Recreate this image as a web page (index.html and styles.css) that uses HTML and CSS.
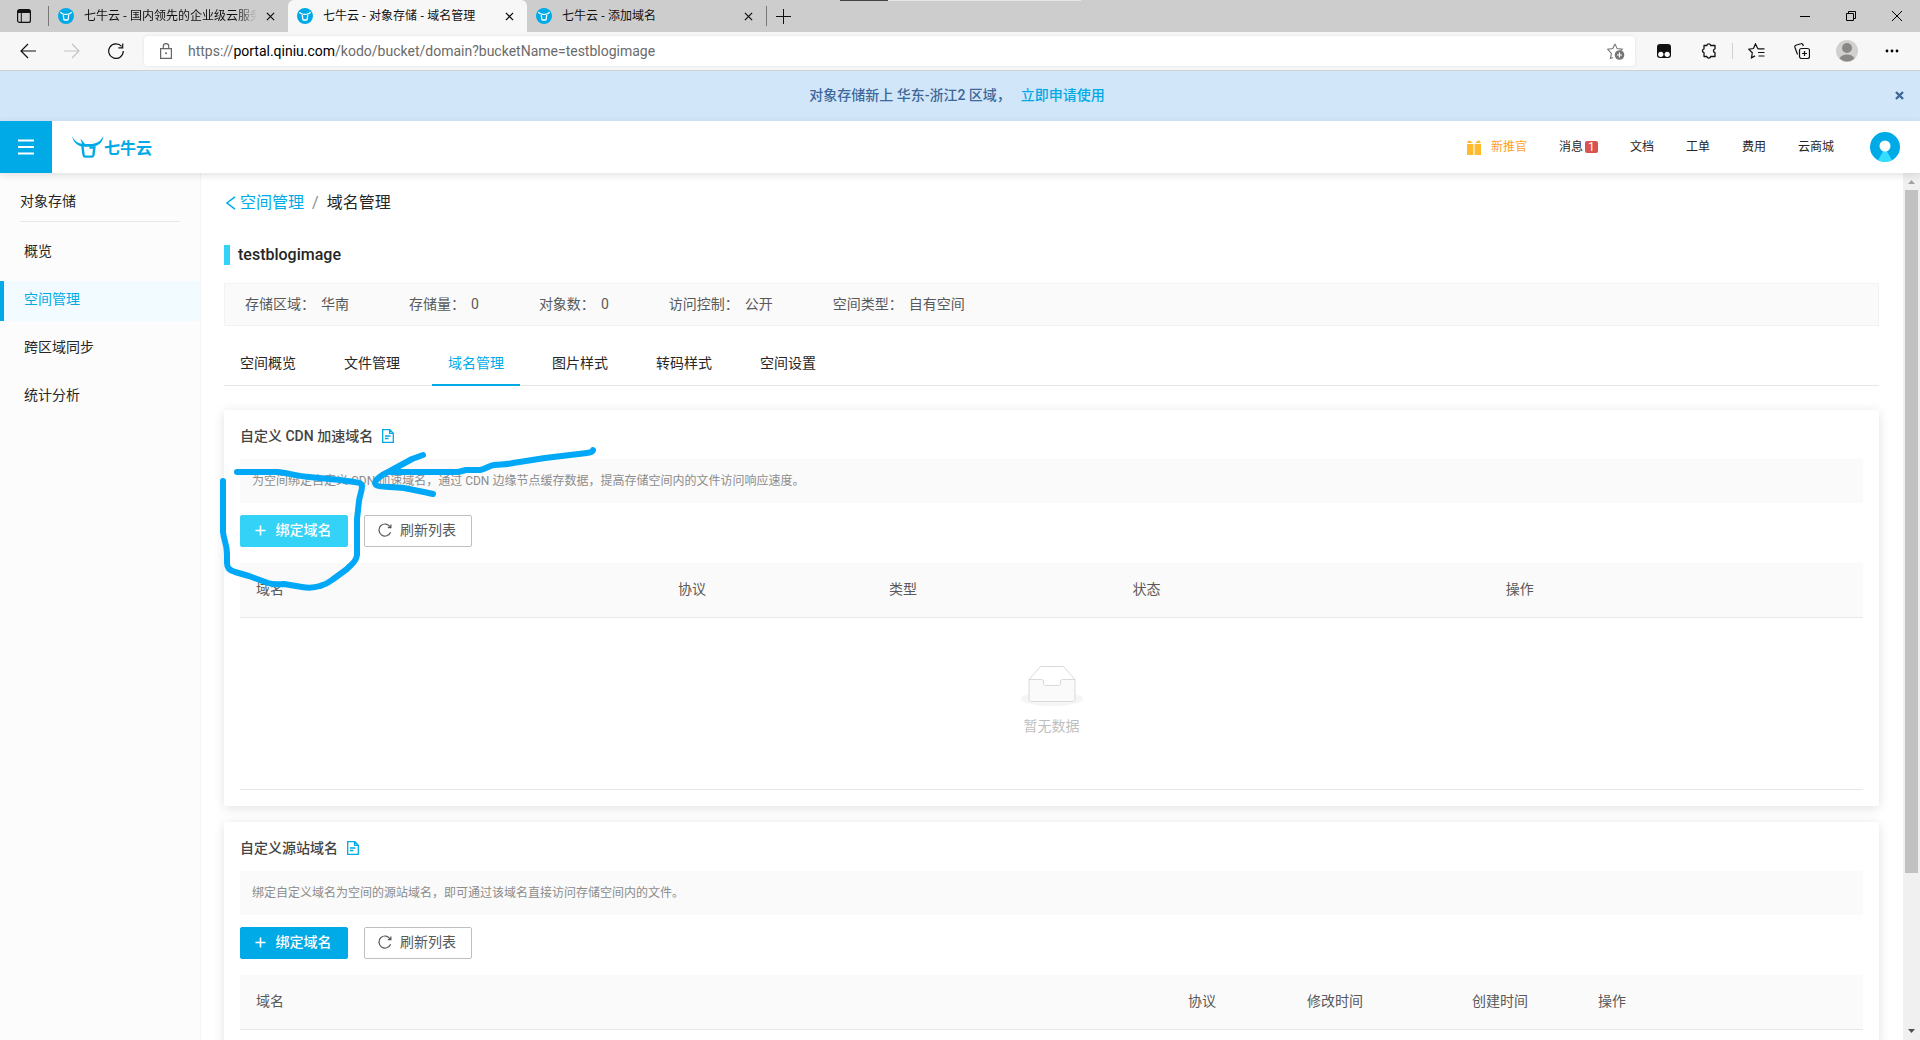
FILE: index.html
```html
<!DOCTYPE html>
<html lang="zh-CN">
  <head>
    <meta charset="UTF-8" />
    <meta name="viewport" content="width=device-width, initial-scale=1.0" />
    <title>七牛云 - 对象存储 - 域名管理</title>
    <link rel="stylesheet" href="styles.css">
  </head>
  <body>
    <!-- Shared icons -->
    <svg class="sprite" aria-hidden="true">
      <symbol id="favicon" viewBox="0 0 16 16">
        <circle cx="8" cy="8" r="8" fill="#00aae7" />
        <path d="M2.500 4c1.500 3.200 9.500 3.200 11 0M5.300 7l.5 4.200c0 .6.4.8.9.8h2.600c.5 0 .9-.2.9-.8l.5-4.200" fill="none" stroke="#fff" stroke-width="1.300" />
      </symbol>
      <symbol id="close" viewBox="0 0 10 10">
        <path d="M1 1l8 8M9 1l-8 8" fill="none" stroke="#111" stroke-width="1.400" />
      </symbol>
      <symbol id="doc" viewBox="0 0 12 14">
        <path d="M.7.7h7.1l3.500 3.500v9.100H.7zM7.600.7v3.700h3.700M3 7h5.500M3 9.500h3.500" fill="none" stroke="#00aae7" stroke-width="1.300" />
      </symbol>
      <symbol id="plus" viewBox="0 0 12 12">
        <path d="M6 .5v11M.5 6h11" fill="none" stroke="#fff" stroke-width="1.800" />
      </symbol>
      <symbol id="reload" viewBox="0 0 14 14">
        <path d="M12.600 9.200A6 6 0 1 1 12.300 4.200M12.900 1.500v3.200H9.800" fill="none" stroke="#595959" stroke-width="1.200" />
      </symbol>
    </svg>

    <div class="tab-strip">
      <span class="window-mark"></span>
      <button class="strip-btn" aria-label="标签页操作">
        <svg width="14" height="14" viewBox="0 0 14 14"><rect x=".6" y=".6" width="12.800" height="12.800" rx="2" fill="none" stroke="#111" stroke-width="1.200" /><path d="M1 1h12v3H1zM3.800 4h1v9h-1z" fill="#111" /></svg>
      </button>
      <span class="strip-sep"></span>
      <div class="browser-tab">
        <svg width="16" height="16"><use href="#favicon" /></svg>
        <span class="tab-title faded">七牛云 - 国内领先的企业级云服务</span>
        <button class="tab-close" aria-label="关闭"><svg width="9" height="9"><use href="#close" /></svg></button>
      </div>
      <div class="browser-tab current">
        <svg width="16" height="16"><use href="#favicon" /></svg>
        <span class="tab-title">七牛云 - 对象存储 - 域名管理</span>
        <button class="tab-close" aria-label="关闭"><svg width="9" height="9"><use href="#close" /></svg></button>
      </div>
      <div class="browser-tab">
        <svg width="16" height="16"><use href="#favicon" /></svg>
        <span class="tab-title">七牛云 - 添加域名</span>
        <button class="tab-close" aria-label="关闭"><svg width="9" height="9"><use href="#close" /></svg></button>
      </div>
      <span class="strip-sep"></span>
      <button class="strip-btn" aria-label="新建标签页">
        <svg width="15" height="15" viewBox="0 0 15 15"><path d="M7.500 0v15M0 7.500h15" stroke="#111" /></svg>
      </button>
      <div class="window-buttons">
        <button aria-label="最小化"><svg width="10" height="10" viewBox="0 0 10 10"><path d="M0 5.500h10" stroke="#000" /></svg></button>
        <button aria-label="还原"><svg width="10" height="10" viewBox="0 0 10 10"><path d="M.5 2.500h7v7h-7zM2.500 2.500v-2h7v7h-2" fill="none" stroke="#000" /></svg></button>
        <button aria-label="关闭窗口"><svg width="10" height="10" viewBox="0 0 10 10"><path d="M0 0l10 10M10 0L0 10" stroke="#000" /></svg></button>
      </div>
    </div>

    <div class="toolbar">
      <button aria-label="后退"><svg width="16" height="16" viewBox="0 0 16 16"><path d="M8 1L1 8l7 7M1 8h15" fill="none" stroke="#111" stroke-width="1.200" /></svg></button>
      <button aria-label="前进"><svg width="16" height="16" viewBox="0 0 16 16"><path d="M8 1l7 7-7 7M15 8H0" fill="none" stroke="#c4c4c4" stroke-width="1.200" /></svg></button>
      <button aria-label="刷新"><svg width="16" height="16" viewBox="0 0 16 16"><path d="M15.300 8A7.300 7.300 0 1 1 13.600 3.400M14.700.5v4.300h-4.300" fill="none" stroke="#111" stroke-width="1.200" /></svg></button>
      <div class="address">
        <svg width="12" height="16" viewBox="0 0 12 16"><path d="M.6 5.600h10.800v9.800H.6zM3.300 5.600V3.300a2.700 2.700 0 0 1 5.400 0v2.300" fill="none" stroke="#666" stroke-width="1.200" /><circle cx="6" cy="10.300" r="1" fill="#666" /></svg>
        <span class="url">https://<b>portal.qiniu.com</b>/kodo/bucket/domain?bucketName=testblogimage</span>
        <button aria-label="收藏"><svg width="18" height="17" viewBox="0 0 18 17"><path d="M8 .9l2.100 4.700 5.100.6-1.700 1.600M6 14.500l-2.600 1 1-5.200L.8 6.300l5-.7L8 .9" fill="none" stroke="#767676" stroke-width="1.100" /><circle cx="12.500" cy="12" r="4.800" fill="#767676" /><path d="M12.500 9.500v5M10 12h5" stroke="#fff" stroke-width="1.200" /></svg></button>
      </div>
      <div class="tools">
        <button aria-label="扩展程序"><svg width="14" height="14" viewBox="0 0 14 14"><rect width="14" height="14" rx="3" fill="#111" /><circle cx="3.800" cy="10.300" r="2.600" fill="#fff" /><circle cx="10.200" cy="10.300" r="2.600" fill="#fff" /></svg></button>
        <button aria-label="扩展"><svg width="16" height="16" viewBox="0 0 16 16"><path d="M3 2.500h2.800a2 2 0 0 1 3.900 0H14v3.300a2 2 0 0 0 0 3.900v3.800H9.700a2 2 0 0 1-3.900 0H3V9.700a2 2 0 0 1 0-3.900z" fill="none" stroke="#111" stroke-width="1.300" stroke-linejoin="round" /></svg></button>
        <span class="tool-sep"></span>
        <button aria-label="收藏夹"><svg width="17" height="16" viewBox="0 0 17 16"><path d="M9.800 5.800L7.500.9 5.400 5.500.8 6.200l3.500 3.600-.8 5 3.500-1.900M9.800 5.800h6.700M10 9.500h6.500M10.500 13h6" fill="none" stroke="#111" stroke-width="1.200" /></svg></button>
        <button aria-label="集锦"><svg width="16" height="16" viewBox="0 0 16 16"><rect x="5.500" y="5.500" width="10" height="10" rx="2" fill="none" stroke="#111" stroke-width="1.200" /><path d="M10.500 8v5M8 10.500h5M3.500 11.500L.9 4.200C.6 3.200 1 2.600 1.800 2.300L7 .7c.9-.3 1.600.1 1.900 1l.4 1.500" fill="none" stroke="#111" stroke-width="1.200" /></svg></button>
        <button aria-label="个人资料"><svg width="22" height="22" viewBox="0 0 22 22"><circle cx="11" cy="11" r="11" fill="#d2d0ce" /><circle cx="11" cy="8" r="5" fill="#8a8886" /><path d="M3.500 18.500C5.500 13 16.500 13 18.500 18.500a11 11 0 0 1-15 0z" fill="#8a8886" /></svg></button>
        <button aria-label="设置"><svg width="14" height="4" viewBox="0 0 14 4"><circle cx="2" cy="2" r="1.400" /><circle cx="7" cy="2" r="1.400" /><circle cx="12" cy="2" r="1.400" /></svg></button>
      </div>
    </div>

    <div class="notice">
      <span>对象存储新上 华东-浙江2 区域，</span>
      <a href="#">立即申请使用</a>
      <button class="notice-close" aria-label="关闭公告"><svg width="9" height="9" viewBox="0 0 9 9"><path d="M1 1l7 7M8 1L1 8" stroke="#3d6899" stroke-width="2.400" /></svg></button>
    </div>

    <header class="header">
      <button class="menu-btn" aria-label="菜单"><svg width="16" height="16" viewBox="0 0 16 16"><path d="M0 1.500h16M0 8h16M0 14.500h16" stroke="#fff" stroke-width="2" /></svg></button>
      <a class="logo" href="#">
        <svg width="32" height="22" viewBox="0 0 32 22"><path d="M0 0c3 6 7 7.500 10 7.700L8.500 2.500l4.500 5.500h5C24 8 28 6 31.500 0c-1 7-5.500 10.500-12.500 10.800h-6C5.500 10.500 1.500 6.500 0 0z" fill="#00aae7" /><path d="M10.300 9.500l1.300 9.500c.2 1 .7 1.600 1.700 1.600h6.400c1 0 1.500-.6 1.700-1.600l1-7.500h-5" fill="none" stroke="#00aae7" stroke-width="2.400" /></svg>
        <span>七牛云</span>
      </a>
      <nav class="top-nav">
        <a class="promo" href="#"><svg width="14" height="15" viewBox="0 0 14 15"><path d="M0 4h6.400v11H0zM7.600 4H14v11H7.600zM0 3l2-3 4 3zM14 3l-2-3-4 3z" fill="#ffbb2d" /></svg>新推官</a>
        <a href="#">消息<span class="badge">1</span></a>
        <a href="#">文档</a>
        <a href="#">工单</a>
        <a href="#">费用</a>
        <a href="#">云商城</a>
        <a class="avatar" href="#" aria-label="账号"><svg width="30" height="30" viewBox="0 0 30 30"><circle cx="15" cy="15" r="15" fill="#00aae7" /><path d="M15 16l7 12.300a15 15 0 0 1-14 0z" fill="#35ddff" /><circle cx="15" cy="14" r="5.500" fill="#fff" /></svg></a>
      </nav>
    </header>

    <div class="layout">
      <aside class="sidebar">
        <h2>对象存储</h2>
        <a href="#">概览</a>
        <a class="active" href="#">空间管理</a>
        <a href="#">跨区域同步</a>
        <a href="#">统计分析</a>
      </aside>

      <main class="content">
        <div class="breadcrumb">
          <a href="#"><svg width="10" height="14" viewBox="0 0 10 14"><path d="M9 .8L1 7l8 6.200" fill="none" stroke="#00aae7" stroke-width="1.500" /></svg>空间管理</a>
          <span class="slash">/</span>
          <span>域名管理</span>
        </div>
        <h1>testblogimage</h1>

        <dl class="info">
          <div><dt>存储区域：</dt><dd>华南</dd></div>
          <div><dt>存储量：</dt><dd>0</dd></div>
          <div><dt>对象数：</dt><dd>0</dd></div>
          <div><dt>访问控制：</dt><dd>公开</dd></div>
          <div><dt>空间类型：</dt><dd>自有空间</dd></div>
        </dl>

        <nav class="tabs">
          <a href="#">空间概览</a>
          <a href="#">文件管理</a>
          <a class="active" href="#">域名管理</a>
          <a href="#">图片样式</a>
          <a href="#">转码样式</a>
          <a href="#">空间设置</a>
        </nav>

        <section class="card">
          <h3>自定义 CDN 加速域名 <svg width="12" height="14"><use href="#doc" /></svg></h3>
          <p class="tip">为空间绑定自定义 CDN 加速域名，通过 CDN 边缘节点缓存数据，提高存储空间内的文件访问响应速度。</p>
          <div class="actions">
            <button class="btn primary hovered"><svg width="11" height="11"><use href="#plus" /></svg>绑定域名</button>
            <button class="btn"><svg width="14" height="14"><use href="#reload" /></svg>刷新列表</button>
          </div>
          <table class="cdn-table">
            <thead>
              <tr><th>域名</th><th>协议</th><th>类型</th><th>状态</th><th>操作</th></tr>
            </thead>
            <tbody>
              <tr>
                <td colspan="5">
                  <div class="empty">
                    <svg width="64" height="41" viewBox="0 0 64 41">
                      <ellipse cx="32" cy="33" rx="31" ry="7" fill="#f5f5f5" />
                      <path d="M9 13.500L20.500.500h23L55 13.500" fill="#fff" stroke="#d9d9d9" />
                      <path d="M9 13.500h12.500c1.500 0 2 1 2 2.500v1c0 1.500 1 2.500 2 2.500h13c1 0 2-1 2-2.500v-1c0-1.500.5-2.500 2-2.500H55V33c0 1.500-1 2.500-2.500 2.500h-41C10 35.500 9 34.500 9 33z" fill="#fafafa" stroke="#d9d9d9" />
                    </svg>
                    <span>暂无数据</span>
                  </div>
                </td>
              </tr>
            </tbody>
          </table>
        </section>

        <section class="card">
          <h3>自定义源站域名 <svg width="12" height="14"><use href="#doc" /></svg></h3>
          <p class="tip">绑定自定义域名为空间的源站域名，即可通过该域名直接访问存储空间内的文件。</p>
          <div class="actions">
            <button class="btn primary"><svg width="11" height="11"><use href="#plus" /></svg>绑定域名</button>
            <button class="btn"><svg width="14" height="14"><use href="#reload" /></svg>刷新列表</button>
          </div>
          <table class="source-table">
            <thead>
              <tr><th>域名</th><th>协议</th><th>修改时间</th><th>创建时间</th><th>操作</th></tr>
            </thead>
          </table>
        </section>

        <!-- Hand-drawn pointer to the bind button -->
        <svg class="scribble" width="400" height="160" viewBox="210 440 400 160">
          <path d="M237 473h40c11 1 20 4 32 5l31 3c15 2 22 2 22 6 0 6-2 8-3 15l-2 18v36c-1 8-7 10-10 14l-15 11c-5 4-8 5-12 6-6 2-12 2-18 1l-18-3c-6 0-10 1-16-1l-19-7-14-4c-6-2-8-4-8-9v-9c0-10-3-13-4-22v-51" />
          <path d="M593 451c-1 3-3 2-6 3l-42 5-32 5c-8 2-12 1-19 2-6 1-8 4-14 5h-14l-8 2h-67" />
          <path d="M423 456l-11 4-22 12c-7 3-18 10-14 14 3 3 17 1 28 3l20 4 9 2" />
        </svg>
      </main>

      <div class="scrollbar" aria-hidden="true">
        <svg width="17" height="17" viewBox="0 0 17 17"><path d="M5 11h7L8.500 7z" fill="#a3a3a3" /></svg>
        <div class="track"><div class="thumb"></div></div>
        <svg width="17" height="17" viewBox="0 0 17 17"><path d="M5 6h7l-3.500 4z" fill="#505050" /></svg>
      </div>
    </div>
  </body>
</html>
```
FILE: styles.css
```css
* {
  box-sizing: border-box;
}
body {
  display: flex;
  flex-direction: column;
  height: 100vh;
  margin: 0;
  overflow: hidden;
  font-family: Roboto, "Noto Sans CJK SC", sans-serif;
  font-size: 14px;
  line-height: 22px;
  color: #262626;
  background: #fff;
}
a {
  color: inherit;
  text-decoration: none;
}
button {
  display: flex;
  align-items: center;
  justify-content: center;
  padding: 0;
  border: none;
  background: none;
  font: inherit;
  color: inherit;
  cursor: pointer;
}
svg {
  flex: none;
}
.sprite {
  position: absolute;
  width: 0;
  height: 0;
}

/* Browser tabs */
.tab-strip {
  position: relative;
  display: flex;
  align-items: center;
  flex: none;
  height: 32px;
  background: #cdcdcd;
  font-family: "Open Sans", "Noto Sans CJK SC", sans-serif;
  font-size: 12px;
}
.window-mark {
  position: absolute;
  top: 0;
  left: 840px;
  width: 241px;
  height: 1px;
  background: #e6e6e6;
  border-left: 48px solid #444;
}
.strip-btn {
  width: 48px;
  height: 32px;
}
.strip-btn:last-of-type {
  width: 32px;
}
.strip-sep {
  width: 1px;
  height: 20px;
  background: #777;
}
.browser-tab {
  display: flex;
  align-items: center;
  width: 239px;
  height: 32px;
  padding: 0 10px 0 9px;
}
.browser-tab.current {
  background: #f7f7f7;
  border-radius: 6px 6px 0 0;
}
.tab-title {
  flex: 1;
  margin: 0 0 0 10px;
  white-space: nowrap;
  color: #111;
}
.faded {
  -webkit-mask-image: linear-gradient(to right, #000 86%, transparent 97%);
  mask-image: linear-gradient(to right, #000 86%, transparent 97%);
}
.tab-close {
  width: 16px;
  height: 16px;
}
.window-buttons {
  display: flex;
  margin-left: auto;
}
.window-buttons button {
  width: 46px;
  height: 28px;
}

/* Address bar */
.toolbar {
  display: flex;
  align-items: center;
  flex: none;
  height: 39px;
  padding: 0 6px;
  background: #f7f7f7;
  border-bottom: 1px solid #cfcfcf;
}
.toolbar > button {
  width: 44px;
  height: 30px;
}
.address {
  display: flex;
  align-items: center;
  flex: 1;
  height: 30px;
  margin-left: 6px;
  padding: 0 10px 0 16px;
  background: #fff;
  border-radius: 4px;
  box-shadow: 0 0 3px rgba(0, 0, 0, 0.1);
}
.url {
  flex: 1;
  margin-left: 16px;
  color: #6b6b6b;
}
.url b {
  font-weight: normal;
  color: #000;
}
.tools {
  display: flex;
  align-items: center;
}
.tools button {
  width: 45px;
  height: 30px;
}
.tools button:first-child {
  margin-left: 6px;
}
.tool-sep {
  width: 1px;
  height: 16px;
  margin: 0 1px;
  background: #cfcfcf;
}

/* Announcement */
.notice {
  position: relative;
  display: flex;
  align-items: center;
  justify-content: center;
  gap: 10px;
  flex: none;
  height: 50px;
  padding: 0 6px 2px 0;
  background: #d2e6fa;
  color: #3d6899;
  font-weight: 500;
}
.notice a {
  color: #00aae7;
}
.notice-close {
  position: absolute;
  right: 16px;
  width: 9px;
  height: 9px;
}

/* Header */
.header {
  position: relative;
  z-index: 2;
  display: flex;
  align-items: center;
  flex: none;
  height: 52px;
  background: #fff;
  box-shadow: 0 2px 8px rgba(0, 0, 0, 0.12);
}
.menu-btn {
  width: 52px;
  height: 52px;
  background: #00aae7;
}
.logo {
  display: flex;
  align-items: center;
  margin-left: 20px;
  font-size: 16px;
  font-weight: bold;
  color: #00aae7;
}
.logo span {
  padding-top: 4px;
}
.top-nav {
  display: flex;
  align-items: center;
  gap: 32px;
  margin-left: auto;
  padding-right: 20px;
  font-size: 12px;
}
.promo {
  display: flex;
  align-items: center;
  gap: 10px;
  color: #ff9f1a;
}
.badge {
  display: inline-block;
  width: 13px;
  margin-left: 2px;
  border-radius: 2px;
  background: #d9534f;
  color: #fff;
  line-height: 12px;
  text-align: center;
}
.avatar {
  display: flex;
  margin-left: 4px;
}

/* Page layout */
.layout {
  display: flex;
  flex: 1;
  min-height: 0;
}
.sidebar {
  display: flex;
  flex-direction: column;
  gap: 8px;
  flex: none;
  width: 201px;
  background: #fcfcfc;
  border-right: 1px solid #f5f5f5;
}
.sidebar h2 {
  margin: 17px 20px 3px;
  padding-bottom: 9px;
  border-bottom: 1px solid #e8e8e8;
  font-size: 14px;
  font-weight: normal;
}
.sidebar a {
  padding: 6px 20px 10px;
  border-left: 4px solid transparent;
  line-height: 24px;
}
.sidebar a.active {
  border-color: #00aae7;
  background: #f2fbff;
  color: #00aae7;
}
.content {
  position: relative;
  flex: 1;
  min-width: 0;
  padding: 19px 24px 0 23px;
  overflow: hidden;
}
.breadcrumb {
  display: flex;
  gap: 8px;
  font-size: 16px;
}
.breadcrumb a {
  display: flex;
  align-items: center;
  gap: 4px;
  padding-left: 2px;
  color: #00aae7;
}
.slash {
  color: #8c8c8c;
}
h1 {
  margin: 31px 0 18px;
  padding-left: 8px;
  border-left: 6px solid #35d2f7;
  font-size: 16px;
  font-weight: 500;
  line-height: 20px;
}
.info {
  display: flex;
  gap: 60px;
  margin: 0;
  padding: 9px 20px 10px;
  border: 1px solid #f2f2f2;
  background: #fafafa;
  color: #595959;
}
.info div {
  display: flex;
  gap: 6px;
}
.info dd {
  margin: 0;
}
.tabs {
  display: flex;
  gap: 16px;
  margin-top: 15px;
  border-bottom: 1px solid #e8e8e8;
}
.tabs a {
  margin-bottom: -1px;
  padding: 11px 16px 10px;
  border-bottom: 2px solid transparent;
}
.tabs a.active {
  border-color: #00aae7;
  color: #00aae7;
}

/* Domain cards */
.card {
  margin-bottom: 16px;
  padding: 15px 16px 16px;
  border-radius: 2px;
  background: #fff;
  box-shadow: 0 2px 12px rgba(0, 0, 0, 0.12);
}
.tabs + .card {
  margin-top: 24px;
}
.card h3 {
  display: flex;
  align-items: center;
  gap: 9px;
  margin: 0 0 12px;
  font-size: 14px;
  font-weight: 500;
  color: #434343;
}
.tip {
  margin: 0 0 12px;
  padding: 11px 12px;
  background: #fafafa;
  color: #8c8c8c;
  font-size: 12px;
}
.actions {
  display: flex;
  gap: 16px;
  margin-bottom: 16px;
}
.btn {
  gap: 8px;
  width: 108px;
  height: 32px;
  padding: 0 2px 2px 0;
  border: 1px solid #bfbfbf;
  border-radius: 2px;
  background: #fff;
  color: #595959;
}
.btn.primary {
  gap: 10px;
  border-color: #00aae7;
  background: #00aae7;
  color: #fff;
  font-weight: 500;
}
.btn.hovered {
  border-color: #35d2f7;
  background: #35d2f7;
}
table {
  width: 100%;
  border-collapse: separate;
  border-spacing: 0;
  table-layout: fixed;
}
th {
  padding: 15px 16px 17px;
  border-bottom: 1px solid #e8e8e8;
  background: #fafafa;
  color: #595959;
  font-weight: normal;
  text-align: left;
}
td {
  padding: 48px 16px 52px;
  border-bottom: 1px solid #e8e8e8;
}
.cdn-table th:nth-child(1) {
  width: 26%;
}
.cdn-table th:nth-child(2) {
  width: 13%;
}
.cdn-table th:nth-child(3) {
  width: 15%;
}
.cdn-table th:nth-child(4) {
  width: 23%;
}
.source-table th:nth-child(2) {
  width: 119px;
}
.source-table th:nth-child(3) {
  width: 165px;
}
.source-table th:nth-child(4) {
  width: 126px;
}
.source-table th:nth-child(5) {
  width: 281px;
}
.empty {
  display: flex;
  flex-direction: column;
  align-items: center;
  gap: 8px;
  color: #bfbfbf;
}

/* Pen drawing over the first card */
.scribble {
  position: absolute;
  top: 266px;
  left: 9px;
  pointer-events: none;
  fill: none;
  stroke: #00a8f7;
  stroke-width: 6;
  stroke-linecap: round;
  stroke-linejoin: round;
}

/* Scrollbar */
.scrollbar {
  display: flex;
  flex-direction: column;
  flex: none;
  width: 17px;
  background: #f0f0f0;
}
.track {
  flex: 1;
  padding: 0 2px;
}
.thumb {
  height: 82%;
  background: #c1c1c1;
}
```
